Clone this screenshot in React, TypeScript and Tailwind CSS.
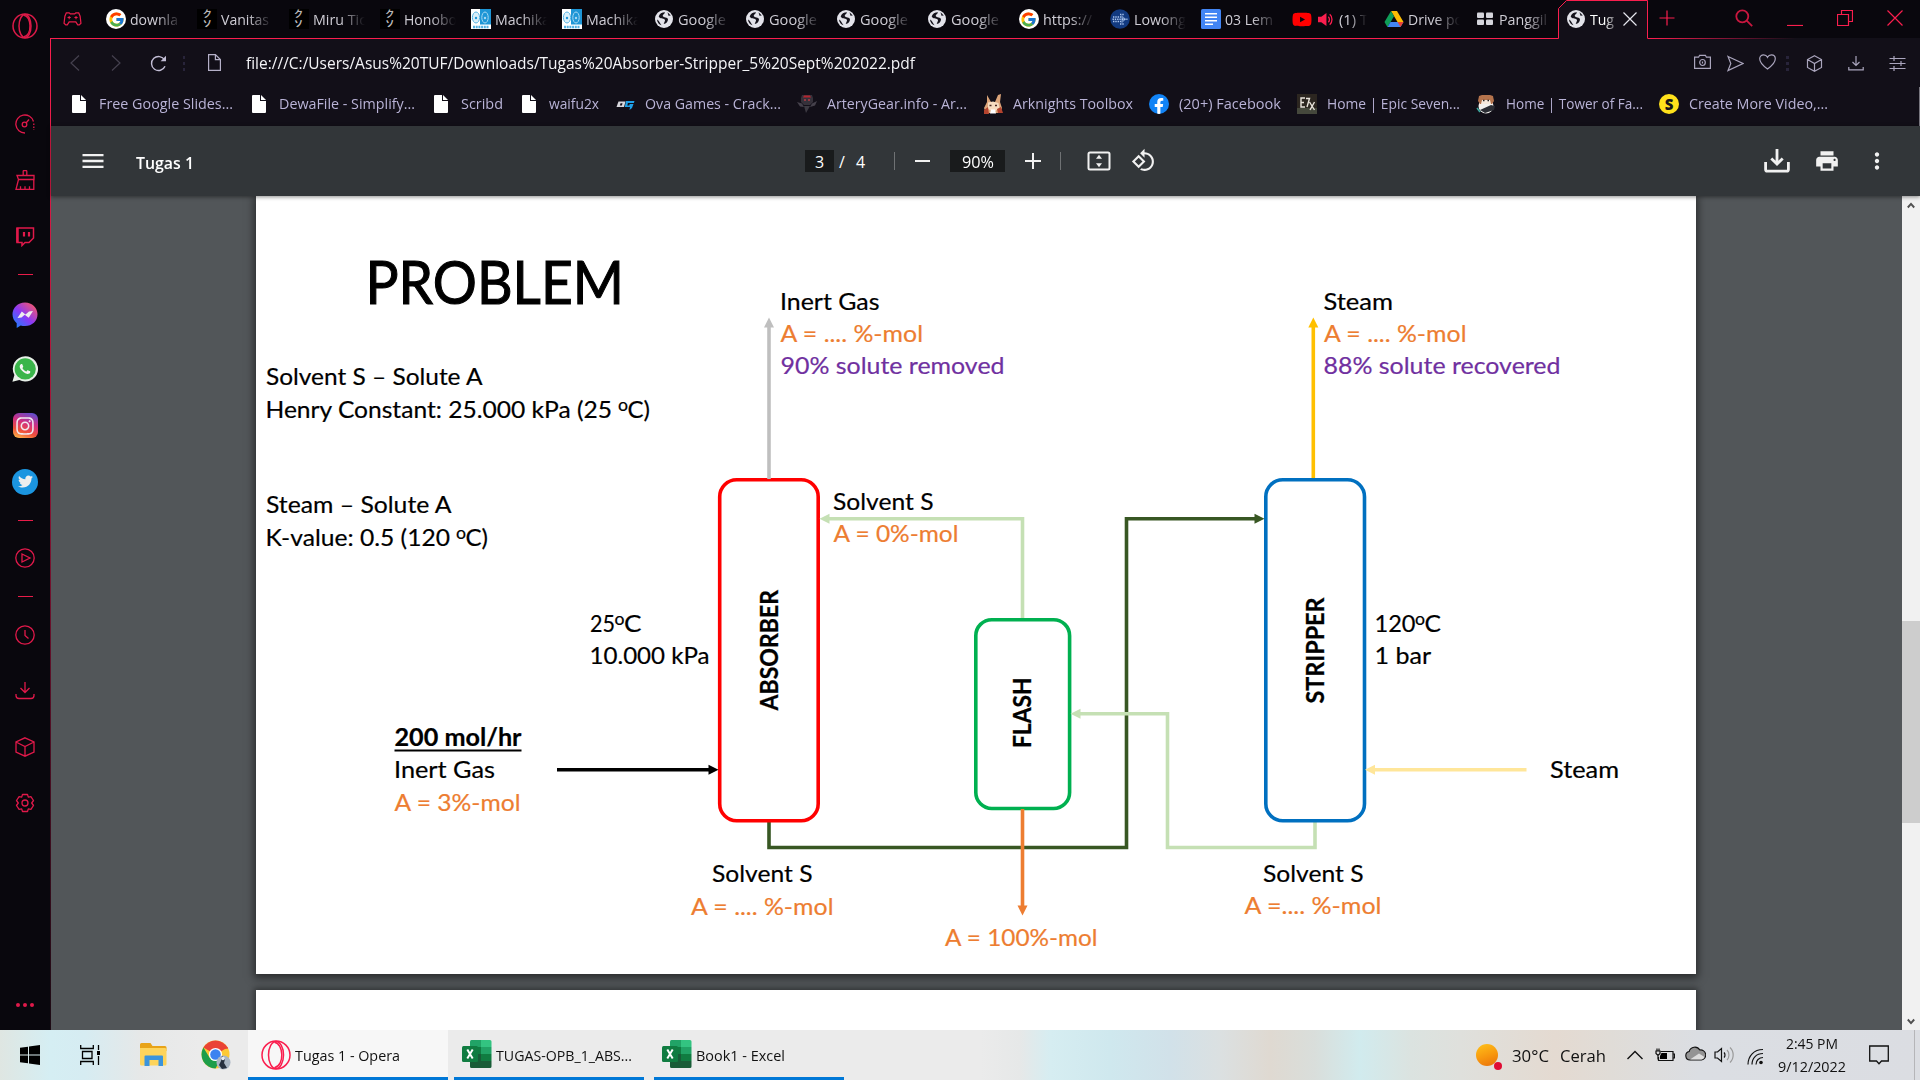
import { useLayoutEffect, useRef, useState } from "react";
import type { ReactNode } from "react";
import { FcGoogle } from "react-icons/fc";
import { FaFacebookF, FaTwitter, FaWhatsapp, FaInstagram, FaYoutube } from "react-icons/fa";
import { MdPrint, MdMoreVert, MdMenu } from "react-icons/md";

/* Text condensed or widened horizontally so that it fills exactly `w` pixels. */
function Fit({ w, className = "", children }: { w: number; className?: string; children: ReactNode }) {
  const ref = useRef<HTMLSpanElement>(null);
  const [k, setK] = useState(1);
  useLayoutEffect(() => {
    const natural = ref.current?.getBoundingClientRect().width ?? w;
    if (natural > 0) setK((prev) => (w / natural) * prev);
  }, [w]);
  return (
    <span className={"block shrink-0 whitespace-nowrap " + className} style={{ width: w }}>
      <span ref={ref} className="inline-block origin-left" style={{ transform: `scaleX(${k})` }}>
        {children}
      </span>
    </span>
  );
}

/* ---------- tab favicons ---------- */
const GoogleDisc = () => (
  <span className="flex size-5 items-center justify-center rounded-full bg-white">
    <FcGoogle className="size-[17px]" />
  </span>
);
const Kana = () => (
  <span className="flex size-5 flex-col items-center justify-center bg-black text-[9px] leading-[10px] font-bold text-[#b9b9b9] [font-family:'Noto_Sans_CJK_JP',sans-serif]">
    <span>ク</span>
    <span>ソ</span>
  </span>
);
const Share = () => (
  <svg viewBox="0 0 20 20" className="size-5">
    <rect width="20" height="20" fill="#fff" />
    <rect x="9" width="11" height="15.5" fill="#1e96d6" />
    <ellipse cx="5" cy="8.5" rx="3.6" ry="5.5" fill="#d9effa" stroke="#58b4e4" strokeWidth="1" />
    <circle cx="5" cy="9" r="1.2" fill="#1e96d6" />
    <ellipse cx="14" cy="8.5" rx="3.2" ry="5.5" fill="none" stroke="#a8d9f3" strokeWidth="1" />
    <circle cx="14" cy="9" r="1.2" fill="#a8d9f3" />
    <path d="M2 18h16" stroke="#52b1e2" strokeWidth="2.4" strokeDasharray="2 .7" />
  </svg>
);
const Globe = () => (
  <svg viewBox="0 0 20 20" className="size-5">
    <circle cx="10" cy="10" r="9" fill="#e3e3ea" />
    <path d="M11 3.2c-3 0-5.7 1.4-6.3 4.3 1 2.6 4.5 1.6 6 3 1 1.300-.6 2.500-1 4.500 2.500-.6 4.200-2.400 4.300-4.600C13.600 7.800 9.500 8.800 8.700 7 8.600 5.400 10.600 5.300 11 3.200z" fill="#15131c" />
    <path d="M13.500 3.200l3.300 3.300-2.300.3zM3 10.500c1.800.5 2.400 2.800 4.500 5.800-2.500-.8-4.300-3-4.500-5.800z" fill="#15131c" />
  </svg>
);
const DotsGlobe = () => (
  <svg viewBox="0 0 20 20" className="size-5">
    <circle cx="10" cy="10" r="9.800" fill="#123a80" />
    <path d="M3 8h9M2.500 10.200h15M3 12.400h9M10 5.500h4M10 15h4" stroke="#a9c4ee" strokeWidth="1.500" strokeDasharray="1.400 .9" />
    <path d="M11.500 6l4.500 4.200-4.500 4.200z" fill="#a9c4ee" opacity=".6" />
  </svg>
);
const Docs = () => (
  <svg viewBox="0 0 20 20" className="size-5">
    <rect width="20" height="20" rx="1.600" fill="#4285f4" />
    <path d="M4 4.700h12M4 8.200h12M4 11.800h12M4 15.300h8" stroke="#fff" strokeWidth="1.600" />
  </svg>
);
const Drive = () => (
  <svg viewBox="0 0 20 20" className="size-5">
    <path d="M7 2h6l6.500 11h-6z" fill="#fbbc04" />
    <path d="M7 2l3 5.200L3.500 18.200.5 13z" fill="#0f9d58" />
    <path d="M6.500 13h13l-3 5h-13z" fill="#4285f4" />
    <path d="M13.500 13h6l-3 5z" fill="#ea4335" />
  </svg>
);
const Squares = () => (
  <svg viewBox="0 0 20 20" className="size-5" fill="#d5d5dc">
    <rect x="2" y="3.500" width="7" height="5.500" rx="1" />
    <rect x="11" y="3.500" width="7" height="5.500" rx="1" />
    <rect x="2" y="10.500" width="7" height="5.500" rx="1" />
    <rect x="11" y="10.500" width="7" height="5.500" rx="1" />
  </svg>
);

type Tab = { icon: ReactNode; title: string; w: number; audio?: boolean };
const tabs: Tab[] = [
  { icon: <GoogleDisc />, title: "downla", w: 48 },
  { icon: <Kana />, title: "Vanitas", w: 48 },
  { icon: <Kana />, title: "Miru Tic", w: 53 },
  { icon: <Kana />, title: "Honobo", w: 53 },
  { icon: <Share />, title: "Machika", w: 55 },
  { icon: <Share />, title: "Machika", w: 55 },
  { icon: <Globe />, title: "Google", w: 48 },
  { icon: <Globe />, title: "Google", w: 48 },
  { icon: <Globe />, title: "Google", w: 48 },
  { icon: <Globe />, title: "Google", w: 48 },
  { icon: <GoogleDisc />, title: "https://", w: 49 },
  { icon: <DotsGlobe />, title: "Lowong", w: 52 },
  { icon: <Docs />, title: "03 Lem", w: 48 },
  { icon: <FaYoutube className="size-[21px] text-[#f00]" />, title: "(1) T", w: 29, audio: true },
  { icon: <Drive />, title: "Drive po", w: 55 },
  { icon: <Squares />, title: "Panggil", w: 48 },
];

function TabBar() {
  return (
    <div className="relative flex h-[39px] shrink-0 items-stretch bg-[#09070d]">
      <div className="absolute inset-x-0 bottom-0 h-px bg-[linear-gradient(to_right,#fa1e4e_0px,#fa1e4e_1600px,#6b1230_1690px,#120f18_1745px)]" />
      <div className="flex w-[47px] shrink-0 items-center justify-center pb-px">
        <svg viewBox="0 0 20 16" className="mr-1 h-4 w-[19px]" fill="none" stroke="#e81c49" strokeWidth="1.300">
          <path d="M3.500 1.500h3l1.200 1.200h4.600l1.200-1.200h3l1.500 3.500.9 7.500-1.800 1.700h-1.600l-2-3.200H6.500l-2 3.200H2.900L1.100 12.500 2 5z" />
          <path d="M6.500 4.800v3.400M4.800 6.500h3.400M12 6.500h3.400M13.700 4.800v3.400" strokeWidth="1.100" />
        </svg>
      </div>
      {tabs.map((t, i) => (
        <div key={i} className="flex w-[91.250px] shrink-0 items-center pb-px pl-2">
          <span className="flex w-5 shrink-0 justify-center">{t.icon}</span>
          {t.audio && (
            <svg viewBox="0 0 16 16" className="ml-1.5 size-[15px] shrink-0" fill="#fa1e4e">
              <path d="M0 5h3.500L9 1v14l-5.500-4H0z" />
              <path d="M11 5c1.600 1.400 1.600 4.600 0 6M12.500 2.500c3.200 2.600 3.200 8.400 0 11" fill="none" stroke="#fa1e4e" strokeWidth="1.400" />
            </svg>
          )}
          <div
            className={
              "text-[15px] leading-[22px] text-[#cfcdd5] " +
              (t.audio
                ? "ml-1.5 w-[30px] [mask-image:linear-gradient(to_right,#000_11px,transparent_28px)]"
                : "ml-1 w-[57px] [mask-image:linear-gradient(to_right,#000_27px,transparent_52px)]")
            }
          >
            <Fit w={t.w}>{t.title}</Fit>
          </div>
        </div>
      ))}
      <div className="relative flex w-[90px] shrink-0 items-center pb-px">
        <svg viewBox="0 0 90 39" className="absolute inset-0 h-[39px] w-[90px]">
          <path d="M.5 39V8.500l8-8H89.500V38.500H90V39z" fill="#120f18" />
          <path d="M.5 38.500V8.500l8-8H89.500V38.500" fill="none" stroke="#fa1e4e" />
        </svg>
        <div className="relative flex items-center pl-2">
          <Globe />
          <Fit w={24} className="ml-1 text-[15px] leading-[22px] text-white [mask-image:linear-gradient(to_right,#000_60%,#0006_100%)]">
            Tug
          </Fit>
          <svg viewBox="0 0 14 14" className="ml-[9px] size-3.5" stroke="#e6e6ee" strokeWidth="1.200">
            <path d="M.5.5l13 13M13.500.5l-13 13" />
          </svg>
        </div>
      </div>
      <div className="flex flex-1 items-center justify-between pr-[17px] pb-[3px] pl-[11px]">
        <svg viewBox="0 0 16 16" className="size-4" stroke="#fa1e4e" strokeWidth="1.200">
          <path d="M8 .5v15M.5 8h15" />
        </svg>
        <div className="flex items-center gap-[34px]">
          <svg viewBox="0 0 18 18" className="size-[18px]" fill="none" stroke="#c9173f" strokeWidth="1.800">
            <circle cx="7.300" cy="7.300" r="6" />
            <path d="M11.700 11.700l5.500 5.500" />
          </svg>
          <svg viewBox="0 0 16 16" className="size-4" stroke="#fa1e4e" strokeWidth="1.200">
            <path d="M0 15.500h16" />
          </svg>
          <svg viewBox="0 0 16 16" className="size-4" fill="none" stroke="#fa1e4e" strokeWidth="1.200">
            <path d="M.5 4.500h11v11H.5zM4.500 4.500v-4h11v11h-4" />
          </svg>
          <svg viewBox="0 0 16 16" className="size-4" stroke="#fa1e4e" strokeWidth="1.200">
            <path d="M.5.500l15 15M15.500.5l-15 15" />
          </svg>
        </div>
      </div>
    </div>
  );
}

const Dots = () => (
  <div className="ml-4 flex flex-col gap-[3px]">
    <i className="h-[3px] w-0.5 bg-[#28243a]" />
    <i className="h-[3px] w-0.5 bg-[#28243a]" />
    <i className="h-[3px] w-0.5 bg-[#28243a]" />
  </div>
);

function AddressBar() {
  return (
    <div className="flex h-[48px] shrink-0 items-center justify-between pr-[14px] pl-[19px]">
      <div className="flex items-center">
        <svg viewBox="0 0 10 16" className="h-4 w-2.5" fill="none" stroke="#45414f" strokeWidth="1.200">
          <path d="M9 .5L1 8l8 7.500" />
        </svg>
        <svg viewBox="0 0 10 16" className="ml-[31px] h-4 w-2.5" fill="none" stroke="#45414f" strokeWidth="1.200">
          <path d="M1 .5L9 8l-8 7.500" />
        </svg>
        <svg viewBox="0 0 17 17" className="ml-[29px] size-[17px]" fill="none" stroke="#c3bed6" strokeWidth="1.400">
          <path d="M15 11.200A7 7 0 1 1 14.600 5" />
          <path d="M16 .8v5.400h-5.400z" fill="#c3bed6" stroke="none" />
        </svg>
        <Dots />
        <svg viewBox="0 0 13 17" className="mb-0.5 ml-[23px] h-[17px] w-[13px]" fill="none" stroke="#b5b0c8" strokeWidth="1.200">
          <path d="M.6.6h6.800l5 5v10.800H.6zM7.400.6v5h5" />
        </svg>
        <Fit w={669} className="ml-[25px] text-base leading-6 text-[#f4f4f7]">
          file:///C:/Users/Asus%20TUF/Downloads/Tugas%20Absorber-Stripper_5%20Sept%202022.pdf
        </Fit>
      </div>
      <div className="flex items-center">
        <svg viewBox="0 0 17 16" className="mb-0.5 h-4 w-[17px]" fill="none" stroke="#aaa5bd" strokeWidth="1.200">
          <path d="M.6 3.200h4l1-1.900h5.800l1 1.900h4v11.200H.6z" />
          <ellipse cx="8.500" cy="8.500" rx="2.800" ry="3" />
          <path d="M8.500 7.500v2" />
        </svg>
        <svg viewBox="0 0 17 17" className="ml-4 size-[17px]" fill="none" stroke="#aaa5bd" strokeWidth="1.200">
          <path d="M1 1.500l15 7-15 7 2.800-7z" />
        </svg>
        <svg viewBox="0 0 17 16" className="mr-[10px] mb-[3px] ml-[15px] h-4 w-[17px]" fill="none" stroke="#aaa5bd" strokeWidth="1.200">
          <path d="M8.500 15C5 12.500.7 8.500.7 4.800.7 2.400 2.500.8 4.600.8c1.700 0 3.100.9 3.900 2.500C9.300 1.700 10.700.8 12.400.8c2.100 0 3.900 1.600 3.900 4 0 3.700-4.300 7.700-7.800 10.200z" />
        </svg>
        <div className="flex w-3 flex-col gap-[3px]">
          <i className="size-[3px] bg-[#28243a]" />
          <i className="size-[3px] bg-[#28243a]" />
          <i className="size-[3px] bg-[#28243a]" />
        </div>
        <svg viewBox="0 0 17 17" className="ml-2 size-[17px]" fill="none" stroke="#aaa5bd" strokeWidth="1.200">
          <path d="M8.500.8l7 3.700v8l-7 3.700-7-3.700v-8zM1.500 4.500l7 4 7-4M8.500 8.500v7.700" />
        </svg>
        <svg viewBox="0 0 16 16" className="ml-[25px] size-4" fill="none" stroke="#aaa5bd" strokeWidth="1.200">
          <path d="M8 1v9.500M4.500 7L8 10.500 11.500 7M.8 12v2.800h14.400V12" />
        </svg>
        <svg viewBox="0 0 17 17" className="ml-[25px] size-[17px]" fill="none" stroke="#aaa5bd" strokeWidth="1.200">
          <path d="M.5 3.500h16M.5 8.500h16M.5 13.500h16M5 1v5M12 6v5M5 11v5" />
        </svg>
      </div>
    </div>
  );
}

const FileIcon = () => (
  <svg viewBox="0 0 14 18" className="h-[18px] w-3.5" fill="#fff">
    <path d="M1 0h7v6h6v11a1 1 0 0 1-1 1H1a1 1 0 0 1-1-1V1a1 1 0 0 1 1-1z" />
    <path d="M9 0l5 5H9z" />
  </svg>
);

const bookmarks: { icon: ReactNode; label: string; w: number }[] = [
  { icon: <FileIcon />, label: "Free Google Slides...", w: 134 },
  { icon: <FileIcon />, label: "DewaFile - Simplify...", w: 136 },
  { icon: <FileIcon />, label: "Scribd", w: 42 },
  { icon: <FileIcon />, label: "waifu2x", w: 50 },
  {
    icon: (
      <svg viewBox="0 0 20 20" className="size-5">
        <path d="M3.500 7.500h7L9 13H1.500z" fill="#d8d8de" />
        <path d="M5.500 9.200h2l-.6 2.200h-2z" fill="#120f18" />
        <path d="M11 7h8.500l-.6 2h-6l-.6 2.500h2l.4-1.500h3.800L17 14l-2.500 2 .5-3h-5.200z" fill="#1fa0e8" />
      </svg>
    ),
    label: "Ova Games - Crack...",
    w: 136,
  },
  {
    icon: (
      <svg viewBox="0 0 20 20" className="size-5">
        <path d="M5 1h10l1 3v4l-3 3H7L4 8V4z" fill="#35313a" />
        <path d="M7 1.500h6l1 2H6z" fill="#b3242f" />
        <path d="M7 6h2M11 6h2" stroke="#f0404a" strokeWidth="1.200" />
        <path d="M0 8l5 1.500L7 13l-4-.5zM20 7l-5 2.500-2 3.500 5-1.500z" fill="#45414b" />
        <path d="M7 12h6l-4 7z" fill="#3c3a42" />
      </svg>
    ),
    label: "ArteryGear.info - Ar...",
    w: 140,
  },
  {
    icon: (
      <svg viewBox="0 0 20 20" className="size-5">
        <path d="M4 1l4 7h4l3-7 3-1-1 8 2 6-2 5H3l-2-5 3-6z" fill="#dca57a" />
        <path d="M5 8.500l5-1 5.500 1.500 1 5-5.500 4-6-3z" fill="#f7dcc0" />
        <path d="M1 16l4-3 1 7H1zM14 15l4-2 2 6h-5z" fill="#b4432e" />
        <path d="M6.500 11.500h2M12 11.500h2" stroke="#4b2a22" strokeWidth="1.500" />
        <path d="M8 15.500h4l1 4H7z" fill="#fff" />
      </svg>
    ),
    label: "Arknights Toolbox",
    w: 120,
  },
  {
    icon: (
      <span className="flex size-5 items-end justify-center overflow-hidden rounded-full bg-[#1183f5]">
        <FaFacebookF className="size-4 text-white" />
      </span>
    ),
    label: "(20+) Facebook",
    w: 102,
  },
  {
    icon: (
      <svg viewBox="0 0 20 20" className="size-5">
        <rect width="20" height="20" fill="#2c2620" />
        <path d="M0 14h20v6H0z" fill="#45483c" />
        <path d="M8 4H4v9h4M4 8.500h3M9 4.500h3.500L10 13M12.500 8l5 8M17.500 8l-4.500 8" fill="none" stroke="#e9e4dc" strokeWidth="1.400" />
      </svg>
    ),
    label: "Home | Epic Seven...",
    w: 133,
  },
  {
    icon: (
      <svg viewBox="0 0 20 20" className="size-5">
        <circle cx="10" cy="12" r="7.500" fill="#f2f0ee" />
        <path d="M3 2l3-1h8l3 1 1 5-2 3H4L2 7z" fill="#b4734c" />
        <path d="M6 6h8l1 4H5z" fill="#f6e9dd" />
        <path d="M7 6.500h1.500M11.500 6.500H13" stroke="#222" strokeWidth="1.500" />
        <path d="M4 16l11-5 4 1-1 4-9 3z" fill="#2a2c33" />
        <path d="M1 14l3 4" stroke="#3fa9a0" strokeWidth="1.500" />
      </svg>
    ),
    label: "Home | Tower of Fa...",
    w: 137,
  },
  {
    icon: (
      <span className="flex size-5 items-center justify-center rounded-full bg-[#ffe11b] text-[15px] leading-5 font-extrabold text-[#15131a]">
        S
      </span>
    ),
    label: "Create More Video,...",
    w: 139,
  },
];

function BookmarksBar() {
  return (
    <div className="flex h-[39px] shrink-0 items-center gap-4 border-r border-[#77757e] pb-1.5 pl-[18px]">
      {bookmarks.map((b) => (
        <div key={b.label} className="flex items-center gap-2.5">
          <span className="flex w-5 justify-center">{b.icon}</span>
          <Fit w={b.w} className="pb-0.5 text-[15px] leading-[22px] text-[#b9b3d6]">
            {b.label}
          </Fit>
        </div>
      ))}
    </div>
  );
}

function PdfToolbar() {
  return (
    <div className="relative z-10 flex h-[70px] shrink-0 items-center bg-[#323639] text-[#f1f1f1] shadow-[0_1px_4px_rgba(0,0,0,0.45)]">
      <MdMenu className="ml-[28px] size-[28px]" />
      <Fit w={58} className="mt-[3px] ml-[29px] text-[17px] leading-6 font-semibold text-white">
        Tugas 1
      </Fit>
      <div className="ml-[611px] flex items-center text-[16px] text-white">
        <span className="flex h-[22px] w-[29px] items-center justify-center bg-[#191b1c] pt-0.5">3</span>
        <span className="w-[22px] pt-0.5 pl-[5px]">/</span>
        <span className="w-[38px] pt-0.5">4</span>
        <i className="h-[18px] w-px bg-[#6f7274]" />
        <i className="ml-5 h-0.5 w-[15px] bg-[#f1f1f1]" />
        <span className="ml-5 flex h-[22px] w-[55px] items-center justify-center bg-[#191b1c] pt-0.5">
          <Fit w={32}>90%</Fit>
        </span>
        <svg viewBox="0 0 16 16" className="ml-5 size-4" stroke="#f1f1f1" strokeWidth="2">
          <path d="M8 0v16M0 8h16" />
        </svg>
        <i className="ml-[19px] h-[18px] w-px bg-[#6f7274]" />
        <svg viewBox="0 0 24 20" className="ml-[26px] h-5 w-6" fill="none" stroke="#f1f1f1" strokeWidth="2">
          <rect x="1.500" y="1.500" width="21" height="17" rx="1.500" />
          <path d="M12 3.700l3 4H9zM12 16.300l3-4H9z" fill="#f1f1f1" stroke="none" />
        </svg>
        <svg viewBox="0 0 24 24" className="mb-px ml-5 size-[25px]" fill="#f1f1f1">
          <path d="M7.340 6.410L.86 12.900l6.490 6.480 6.490-6.480-6.500-6.490zM3.690 12.900l3.660-3.660L11 12.900l-3.660 3.660-3.650-3.660zm15.670-6.260C17.610 4.880 15.300 4 13 4V.76L8.760 5 13 9.240V6c1.790 0 3.580.68 4.950 2.050 2.730 2.730 2.730 7.170 0 9.900C16.580 19.320 14.790 20 13 20c-.97 0-1.940-.21-2.840-.61l-1.490 1.490C10.020 21.620 11.510 22 13 22c2.300 0 4.610-.88 6.360-2.640 3.520-3.510 3.520-9.210 0-12.720z" />
        </svg>
      </div>
      <div className="ml-auto flex items-center pr-[30px]">
        <svg viewBox="0 0 26 24" className="h-6 w-[26px]" fill="none" stroke="#f1f1f1" strokeWidth="2.800">
          <path d="M13 0v15M7.300 9.500L13 15l5.700-5.500" />
          <path d="M1.600 13v7.500a1.700 1.700 0 0 0 1.700 1.700h19.400a1.700 1.700 0 0 0 1.700-1.700V13" />
        </svg>
        <MdPrint className="ml-[24px] size-[26px]" />
        <MdMoreVert className="ml-[24px] size-[26px]" />
      </div>
    </div>
  );
}

/* ---------- slide diagram ---------- */
const ORANGE = "#ed7d31";
const PURPLE = "#7030a0";

type Label = { x: number; y: number; x2: number; t: string; c?: string; b?: boolean };
const labels: Label[] = [
  { x: 266, x2: 482.500, y: 385, t: "Solvent S – Solute A" },
  { x: 266, x2: 451.500, y: 513, t: "Steam – Solute A" },
  { x: 780, x2: 879.500, y: 310, t: "Inert Gas" },
  { x: 780.500, x2: 923, y: 342, t: "A = .... %-mol", c: ORANGE },
  { x: 780.500, x2: 1004.500, y: 374, t: "90% solute removed", c: PURPLE },
  { x: 1323.500, x2: 1393, y: 310, t: "Steam" },
  { x: 1324, x2: 1466.500, y: 342, t: "A = .... %-mol", c: ORANGE },
  { x: 1323.500, x2: 1560.500, y: 374, t: "88% solute recovered", c: PURPLE },
  { x: 833, x2: 933.500, y: 510, t: "Solvent S" },
  { x: 833.500, x2: 958.500, y: 542, t: "A = 0%-mol", c: ORANGE },
  { x: 589.500, x2: 709.500, y: 664, t: "10.000 kPa" },
  { x: 1374.500, x2: 1431, y: 664, t: "1 bar" },
  { x: 394.500, x2: 521.500, y: 746, t: "200 mol/hr", b: true },
  { x: 394, x2: 495, y: 778, t: "Inert Gas" },
  { x: 394.500, x2: 520.500, y: 811, t: "A = 3%-mol", c: ORANGE },
  { x: 712, x2: 812.500, y: 882, t: "Solvent S" },
  { x: 691, x2: 833.500, y: 915, t: "A = .... %-mol", c: ORANGE },
  { x: 945, x2: 1097.500, y: 946, t: "A = 100%-mol", c: ORANGE },
  { x: 1263, x2: 1363.500, y: 882, t: "Solvent S" },
  { x: 1244.500, x2: 1381.500, y: 914, t: "A =.... %-mol", c: ORANGE },
  { x: 1550, x2: 1619, y: 778, t: "Steam" },
];

/* Temperature labels whose degree mark is a raised "o". */
const degrees = [
  { x: 265.500, ox: 618, y: 418, pre: "Henry Constant: 25.000 kPa (25", preEnd: 612, post: "C)", postEnd: 650 },
  { x: 265.500, ox: 456, y: 546, pre: "K-value: 0.5 (120", preEnd: 450, post: "C)", postEnd: 488 },
  { x: 590, ox: 614.500, y: 632, pre: "25", preEnd: 615, post: "C", postEnd: 641.500 },
  { x: 1374.500, ox: 1415, y: 632, pre: "120", preEnd: 1415.500, post: "C", postEnd: 1441 },
];

function Slide() {
  return (
    <svg viewBox="256 196 1440 778" className="block h-full w-full [font-family:Lato,Carlito,sans-serif]" fontSize="24">
      <text x="365.500" y="304" fontSize="60" stroke="#000" strokeWidth="1.100" textLength="258.500" lengthAdjust="spacingAndGlyphs">
        PROBLEM
      </text>
      {labels.map((l, i) => (
        <text
          key={i}
          x={l.x}
          y={l.y}
          fill={l.c ?? "#000"}
          fontWeight={l.b ? 700 : 400}
          stroke={l.c ?? "#000"}
          strokeWidth={0.2}
          textLength={l.x2 - l.x}
          lengthAdjust="spacingAndGlyphs"
        >
          {l.t}
        </text>
      ))}
      <path d="M394.500 750.500h127" stroke="#000" strokeWidth="2" />
      {degrees.map((d, i) => (
        <g key={i} stroke="#000" strokeWidth=".2">
          <text x={d.x} y={d.y} textLength={d.preEnd - d.x} lengthAdjust="spacingAndGlyphs">
            {d.pre}
          </text>
          <text x={d.ox} y={d.y - 7.500} fontSize="17" textLength="10" lengthAdjust="spacingAndGlyphs">
            o
          </text>
          <text x={d.ox + 9.500} y={d.y} textLength={d.postEnd - d.ox - 9.500} lengthAdjust="spacingAndGlyphs">
            {d.post}
          </text>
        </g>
      ))}
      <g fill="none" strokeWidth="3.600">
        <path d="M769 822v25.500h357.500V518.700H1255" stroke="#385723" />
        <path d="M1022.500 619V518.700H828M1315 822v25.500h-147.500V713.700H1080" stroke="#c5e0b4" />
        <rect x="719.700" y="479.700" width="98.500" height="341" rx="17" stroke="#ff0000" />
        <rect x="1265.800" y="479.700" width="98.700" height="341" rx="17" stroke="#0070c0" />
        <rect x="975.800" y="619.700" width="93.800" height="188.800" rx="16" stroke="#00b050" />
        <path d="M769 479V327" stroke="#bfbfbf" />
        <path d="M1313.300 478V327" stroke="#ffc000" />
        <path d="M557 769.700h152" stroke="#000" />
        <path d="M1526.500 769.700H1375" stroke="#ffe699" />
        <path d="M1022.500 809v97" stroke="#ed7d31" />
      </g>
      <path d="M1264.500 518.700l-10-5v10z" fill="#385723" />
      <path d="M819.500 518.700l10-5v10zM1070.500 713.700l10-5v10z" fill="#c5e0b4" />
      <path d="M769 317.500l5 10h-10z" fill="#bfbfbf" />
      <path d="M1313.300 317.500l5 10h-10z" fill="#ffc000" />
      <path d="M718.500 769.700l-10-5v10z" fill="#000" />
      <path d="M1365 769.700l10-5v10z" fill="#ffe699" />
      <path d="M1022.500 915.500l5-10h-10z" fill="#ed7d31" />
      <g fontWeight="700" stroke="#000" strokeWidth=".3">
        <text transform="translate(778 710.500) rotate(-90)" textLength="120.500" lengthAdjust="spacingAndGlyphs">
          ABSORBER
        </text>
        <text transform="translate(1031 748) rotate(-90)" textLength="70.500" lengthAdjust="spacingAndGlyphs">
          FLASH
        </text>
        <text transform="translate(1324 703.500) rotate(-90)" textLength="106" lengthAdjust="spacingAndGlyphs">
          STRIPPER
        </text>
      </g>
    </svg>
  );
}

function Viewer() {
  return (
    <div className="flex min-h-0 flex-1 bg-[#525659]">
      <div className="flex min-w-0 flex-1 flex-col gap-4 overflow-hidden pl-[205px]">
        <div className="h-[778px] w-[1440px] shrink-0 bg-white shadow-[0_2px_8px_2px_rgba(0,0,0,0.5)]">
          <Slide />
        </div>
        <div className="h-20 w-[1440px] shrink-0 bg-white shadow-[0_0_6px_2px_rgba(0,0,0,0.4)]" />
      </div>
      <div className="flex w-[18px] shrink-0 flex-col items-center bg-[#f1f1f1]">
        <svg viewBox="0 0 10 8" className="mt-1.5 h-[7px] w-2" fill="none" stroke="#505050" strokeWidth="2.400">
          <path d="M1 6.500l4-4.500 4 4.500" />
        </svg>
        <div className="mt-[412px] h-[202px] w-full bg-[#cdcdcd]" />
        <svg viewBox="0 0 10 8" className="mt-auto mb-[5px] h-[7px] w-2" fill="none" stroke="#505050" strokeWidth="2.400">
          <path d="M1 1.500l4 4.500 4-4.500" />
        </svg>
      </div>
    </div>
  );
}

/* ---------- sidebar ---------- */
const Row = ({ children }: { children: ReactNode }) => (
  <div className="flex h-[56.300px] shrink-0 items-center justify-center">{children}</div>
);
const Rule = () => (
  <div className="flex h-5 shrink-0 items-center justify-center">
    <i className="h-px w-[15px] bg-[#e81c49]" />
  </div>
);
const Line = ({ children }: { children: ReactNode }) => (
  <svg viewBox="0 0 20 20" className="size-5" fill="none" stroke="#e0194a" strokeWidth="1.300">
    {children}
  </svg>
);

function Sidebar() {
  return (
    <aside className="relative flex w-[51px] shrink-0 flex-col bg-[#09070d] pr-px">
      <div className="absolute top-[38px] right-0 bottom-0 w-px bg-[linear-gradient(to_bottom,#fa1e4e,#c41840_25%,#5a1028_65%,#1c0a14)]" />
      <div className="flex h-[96px] justify-center pt-[13px]">
        <svg viewBox="0 0 26 26" className="size-[26px]" fill="none" stroke="#dc1a48" strokeWidth="1.500">
          <circle cx="13" cy="13" r="12" />
          <ellipse cx="13" cy="13" rx="6" ry="11.500" />
          <path d="M12 2.200c7.500 1 8.500 19.500 0 21.600" />
        </svg>
      </div>
      <Row>
        <Line>
          <path d="M10 19A9 9 0 1 1 18.500 7.500" />
          <path d="M18.800 9.500v6.500" strokeDasharray="1.500 1.500" />
          <circle cx="9.500" cy="10.500" r="2.300" />
          <path d="M11 9l3-3.500" />
        </Line>
      </Row>
      <Row>
        <Line>
          <path d="M8.200 5.500V1.200a.6.6 0 0 1 .6-.6h2.400a.6.6 0 0 1 .6.6v4.300M2 5.500h17v4H3.500zM3.500 9.500L1 19.300h17.800V9.500M5.500 19.300v-3M10 19.300v-3M14.500 19.300v-3" />
        </Line>
      </Row>
      <Row>
        <Line>
          <path d="M2 1h16.500v10l-4.500 4.500h-4L7 18.500v-3H2z" strokeWidth="1.500" />
          <path d="M2.500 1v14.500" strokeWidth="2.500" />
          <path d="M9 5v4.500M14 5v4.500" strokeWidth="2.200" />
        </Line>
      </Row>
      <Rule />
      <Row>
        <svg viewBox="0 0 26 26" className="mt-1 size-[26px]">
          <defs>
            <linearGradient id="msg" x1="0" y1="1" x2=".9" y2="0">
              <stop offset="0" stopColor="#0a8cff" />
              <stop offset=".5" stopColor="#8b39f5" />
              <stop offset="1" stopColor="#ff5a5f" />
            </linearGradient>
          </defs>
          <path d="M13 .5C5.800.5.500 5.700.5 12.300c0 3.600 1.500 6.600 4.200 8.900V26l4-2.500c1.300.4 2.800.6 4.300.6 7.200 0 12.500-5.200 12.500-11.800S20.200.5 13 .5z" fill="url(#msg)" />
          <path d="M5.500 16l4.300-6.500 3.700 3 3.500-3 4-.5-4.300 6.800-4-3-3.200 2.700z" fill="#eee" />
        </svg>
      </Row>
      <Row>
        <span className="relative flex size-[26px] items-center justify-center">
          <svg viewBox="0 0 26 26" className="absolute inset-0 size-[26px]">
            <path d="M13.200.3A12.500 12.500 0 0 0 2.400 19L.4 25.700l6.900-1.800A12.600 12.600 0 1 0 13.200.3z" fill="#e8f0e8" />
            <circle cx="13.200" cy="12.900" r="10.600" fill="#3ab54a" />
          </svg>
          <FaWhatsapp className="relative size-[24px] text-[#f4f4f4] [clip-path:circle(32%)]" />
        </span>
      </Row>
      <Row>
        <span className="flex size-[25px] items-center justify-center rounded-[6px] bg-[linear-gradient(20deg,#fdb24a_5%,#f0503a_30%,#cf2e83_60%,#5b4fd0_95%)]">
          <FaInstagram className="size-[20px] text-[#f0e8f0]" />
        </span>
      </Row>
      <Row>
        <span className="flex size-[26px] items-center justify-center rounded-full bg-[#1b95e0]">
          <FaTwitter className="size-[15px] text-[#eee]" />
        </span>
      </Row>
      <Rule />
      <Row>
        <Line>
          <circle cx="10" cy="10" r="9.200" />
          <path d="M7 6l8 4-8 4z" />
        </Line>
      </Row>
      <Rule />
      <Row>
        <Line>
          <circle cx="10" cy="10" r="9.200" />
          <path d="M10 5v5.500l3.500 3" />
        </Line>
      </Row>
      <Row>
        <Line>
          <path d="M10 1v10M5.500 7l4.500 4.500L14.500 7M1 13v1.500a3 3 0 0 0 3 3h12a3 3 0 0 0 3-3V13" />
        </Line>
      </Row>
      <Row>
        <Line>
          <path d="M10 .8l9 4.200v10l-9 4.200L1 15V5zM1 5l9 4.500L19 5M10 9.500v9.700" />
        </Line>
      </Row>
      <Row>
        <Line>
          <circle cx="10" cy="10" r="3" />
          <path d="M7.500 1.500h5l.8 2.600 2.600-.4L18.500 7.500 16.700 10l1.800 2.500-2.600 3.800-2.600-.4-.8 2.600h-5l-.8-2.600-2.600.4L1.500 12.500 3.300 10 1.500 7.500l2.600-3.800 2.600.4z" strokeLinejoin="round" />
        </Line>
      </Row>
      <div className="mt-auto mb-[23px] flex justify-center gap-[3px]">
        <i className="size-1 rounded-full bg-[#e0194a]" />
        <i className="size-1 rounded-full bg-[#e0194a]" />
        <i className="size-1 rounded-full bg-[#e0194a]" />
      </div>
    </aside>
  );
}

/* ---------- taskbar ---------- */
const Excel = () => (
  <svg viewBox="0 0 30 30" className="size-[30px]">
    <path d="M8 2.500A1.500 1.500 0 0 1 9.500 1H19v9H8z" fill="#21a366" />
    <path d="M19 1h9a1.500 1.500 0 0 1 1.500 1.500V8H19z" fill="#33c481" />
    <path d="M8 8h11v7H8z" fill="#107c41" />
    <path d="M19 8h10.500v7H19z" fill="#21a366" />
    <path d="M8 15h11v7H8z" fill="#185c37" />
    <path d="M19 15h10.500v7H19z" fill="#107c41" />
    <path d="M8 22h21.500v5.500A1.500 1.500 0 0 1 28 29H9.500A1.500 1.500 0 0 1 8 27.500z" fill="#185c37" />
    <rect x="0" y="7" width="16" height="16" rx="1.500" fill="#107c41" />
    <path d="M5.300 10.500l5.400 9M10.700 10.500l-5.400 9" stroke="#fff" strokeWidth="2" />
  </svg>
);

function Taskbar() {
  return (
    <footer className="flex h-[50px] shrink-0 bg-[linear-gradient(to_right,#dfe6e2_0px,#d5eef3_50px,#d6ecf2_85px,#e6e8e8_140px,#ebebeb_200px,#ebebeb_980px,#e6e8e8_1020px,#d6edf1_1050px,#cfe8ee_1110px,#d1e1e9_1170px,#dbe0e1_1220px,#dfd9d1_1270px,#d9dedb_1315px,#d1ebee_1360px,#dbe3e0_1410px,#dfe0dc_1460px,#e4dad1_1555px,#e0dcd7_1610px,#dbdee3_1700px,#dbdde2_1920px)] text-[#111]">
      <div className="flex w-[248px] items-center pl-5">
        <svg viewBox="0 0 20 20" className="size-5" fill="#000">
          <path d="M0 2.800l8-1.100v7.800H0zM9 1.500L20 0v9.500H9zM0 10.500h8v7.800l-8-1.100zM9 10.500h11V20L9 18.500z" />
        </svg>
        <svg viewBox="0 0 21 20" className="ml-[40px] h-5 w-[21px]" fill="none" stroke="#000" strokeWidth="1.300">
          <path d="M.7 0v3.500h12.600V0M.7 20v-3.500h12.600V20M2.500 6.500h9.500v7H2.500zM18.500 0v5M18.500 11v9" />
          <path d="M17 6h3v4h-3z" fill="#000" stroke="none" />
        </svg>
        <svg viewBox="0 0 28 24" className="ml-[38px] h-6 w-7">
          <path d="M1 1.500A1.500 1.500 0 0 1 2.500 0h9l2 3H26a1.500 1.500 0 0 1 1.500 1.500V8H1z" fill="#e8a317" />
          <path d="M1 5h25a1.500 1.500 0 0 1 1.500 1.500V21a1.500 1.500 0 0 1-1.500 1.500H2.500A1.500 1.500 0 0 1 1 21z" fill="#fdd45c" />
          <path d="M5.500 23V13.500a1 1 0 0 1 1-1h16.500a1 1 0 0 1 1 1V23h-4.500v-6h-9v6z" fill="#3b94dc" />
        </svg>
        <svg viewBox="0 0 30 30" className="ml-[34px] size-[30px]">
          <circle cx="14.500" cy="14.500" r="14" fill="#fcc934" />
          <path d="M14.500 14.500L2.400 7.500A14 14 0 0 1 26.600 7.500z" fill="#ea4335" />
          <path d="M2.400 7.500A14 14 0 0 0 14.500 28.500l6-10.500-12-.5z" fill="#1e9e4a" />
          <path d="M14.500 8h12.400" stroke="#ea4335" strokeWidth="1.500" />
          <circle cx="14.500" cy="14.500" r="6.600" fill="#fff" />
          <circle cx="14.500" cy="14.500" r="5.300" fill="#3c82f0" />
          <circle cx="22.500" cy="22.500" r="7" fill="#a9b6c4" />
          <path d="M21 16l3 3-1 4 3 5-5 1-3-4 2-4z" fill="#26303f" />
          <circle cx="22" cy="18.500" r="1.800" fill="#e8edf2" />
        </svg>
      </div>
      <div className="flex w-[200px] items-center gap-1 border-b-[3px] border-[#0078d7] bg-[#f7f7f7] pl-[13px]">
        <svg viewBox="0 0 30 30" className="mt-0.5 size-[30px]" fill="none" stroke="#fa1e4e" strokeWidth="1.500">
          <circle cx="15" cy="15" r="14" />
          <ellipse cx="15" cy="15" rx="7.500" ry="13.500" />
          <path d="M13.500 2.300c9 1.200 10.500 23 0 25.500" />
        </svg>
        <Fit w={105} className="mt-[3px] text-[15px]">
          Tugas 1 - Opera
        </Fit>
      </div>
      <div className="ml-1.5 flex w-[190px] items-center gap-1 border-b-[3px] border-[#0078d7] pl-2">
        <Excel />
        <Fit w={136} className="mt-[3px] text-[15px]">
          TUGAS-OPB_1_ABS...
        </Fit>
      </div>
      <div className="ml-[10px] flex w-[190px] items-center gap-1 border-b-[3px] border-[#0078d7] pl-2">
        <Excel />
        <Fit w={89} className="mt-[3px] text-[15px]">
          Book1 - Excel
        </Fit>
      </div>
      <div className="ml-auto flex items-center">
        <span className="relative mr-[15px] size-[22px] rounded-full bg-[linear-gradient(160deg,#ffc31a,#f7960e_55%,#e86f0a)]">
          <i className="absolute top-[18px] left-[18px] size-2 rounded-full bg-[#e00b33]" />
        </span>
        <Fit w={37} className="mt-0.5 -ml-px text-base">
          30°C
        </Fit>
        <Fit w={46} className="mt-0.5 ml-[11px] text-base">
          Cerah
        </Fit>
        <svg viewBox="0 0 16 10" className="ml-[21px] h-2.5 w-4" fill="none" stroke="#111" strokeWidth="1.400">
          <path d="M.5 9L8 1.500 15.500 9" />
        </svg>
        <svg viewBox="0 0 20 14" className="ml-3 h-3.5 w-5" fill="none" stroke="#111" strokeWidth="1.200">
          <path d="M5.500 3.500H18v9H3.500V9M18.500 6h1v4h-1" />
          <path d="M6.500 5h5.500v6H5V8z" fill="#000" stroke="none" />
          <path d="M1 3h4v2.500L3 7.500 1 5.500zM2 .5V3M4 .5V3M3 7.500v4" />
        </svg>
        <svg viewBox="0 0 21 15" className="mb-1 ml-2.5 h-[15px] w-[21px]" stroke="#111" strokeWidth="1.100">
          <path d="M5 14a4.300 4.300 0 0 1-.8-8.500A5.800 5.800 0 0 1 14.800 4 5 5 0 0 1 16.500 14z" fill="#949494" />
          <path d="M5 13.400L14 7.500l5.500 3.500c-.5 1.600-1.600 2.500-3 2.500z" fill="#ddd" stroke="none" />
        </svg>
        <svg viewBox="0 0 22 18" className="ml-2 h-[18px] w-[22px]" fill="none" stroke="#111" strokeWidth="1.200">
          <path d="M1 6h2.500L7.500 2.500v13L3.500 12H1zM10 6.500c1.300 1.200 1.300 3.800 0 5" />
          <path d="M13 4c2.600 2.500 2.600 7.500 0 10M16 1.500c4.200 3.800 4.200 11.200 0 15" stroke="#9a9a9a" />
        </svg>
        <svg viewBox="0 0 17 17" className="mt-0.5 ml-[11px] size-[17px]" fill="none" stroke="#111" strokeWidth="1.200">
          <path d="M1 16.500C1 8 7 1.500 16 1.500M5 16.500C5 10 9.500 5.500 16 5.500M9 16.500c0-4 3-7 7-7" />
          <circle cx="14" cy="14.500" r="1.800" fill="#111" stroke="none" />
        </svg>
        <div className="ml-[13px] flex w-[70px] flex-col items-center text-[15px] leading-[23px]">
          <Fit w={52}>2:45 PM</Fit>
          <Fit w={68}>9/12/2022</Fit>
        </div>
        <svg viewBox="0 0 20 20" className="mr-[25px] ml-[22px] size-5" fill="none" stroke="#111" strokeWidth="1.300">
          <path d="M.7 1h18.600v15H12.500l-2.500 2.700L7.500 16H.7z" />
        </svg>
        <i className="mr-[5px] h-[50px] w-px bg-[#b5b5b8]" />
      </div>
    </footer>
  );
}

export default function App() {
  return (
    <div className="flex h-[1080px] w-[1920px] flex-col overflow-hidden bg-[#120f18] [font-family:'Open_Sans','Noto_Sans_CJK_JP',sans-serif]">
      <div className="flex min-h-0 flex-1">
        <Sidebar />
        <main className="flex min-w-0 flex-1 flex-col">
          <TabBar />
          <AddressBar />
          <BookmarksBar />
          <PdfToolbar />
          <Viewer />
        </main>
      </div>
      <Taskbar />
    </div>
  );
}
